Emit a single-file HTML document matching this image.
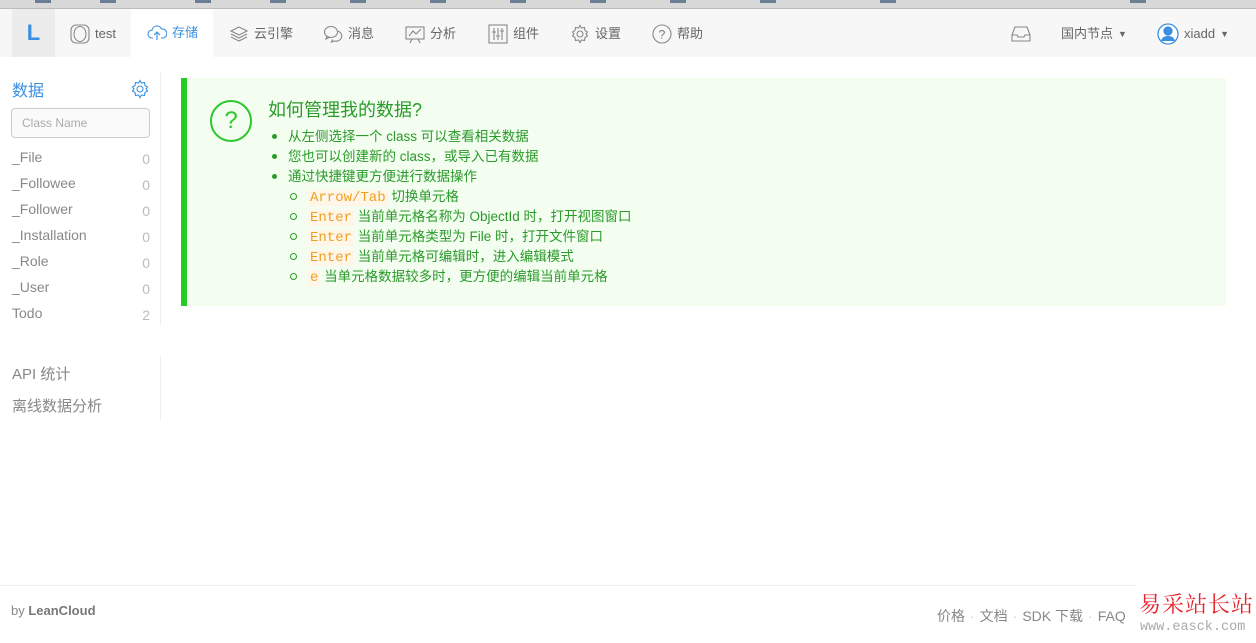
<!DOCTYPE html>
<html><head><meta charset="utf-8"><style>
*{box-sizing:border-box;margin:0;padding:0}
body{width:1256px;height:643px;overflow:hidden;background:#fff;font-family:"Liberation Sans","Noto Sans CJK SC",sans-serif;position:relative;color:#666}
.top{position:absolute;left:0;top:0;width:1256px;height:9px;background:#d8d8d8;border-bottom:1px solid #bbb}
.top i{position:absolute;top:0;width:16px;height:3px;background:#6a7f94}
.nav{position:absolute;left:0;top:9px;width:1256px;height:48px;background:#f7f7f7}
.logo{position:absolute;left:12px;top:0;width:43px;height:48px;background:#ececec;color:#3b8fe0;font-weight:bold;font-size:22px;text-align:center;line-height:48px}
.it{position:absolute;top:1px;height:48px;line-height:48px;font-size:13px;color:#666;display:flex;align-items:center;gap:5px}
.it svg{width:20px;height:20px;fill:none;stroke:#888;stroke-width:1.1}
.act{background:#fff;color:#3b8fe0;top:0}
.hd{position:absolute;left:12px;top:77px;font-size:16px;color:#3b8fe0}
.inp{position:absolute;left:11px;top:108px;width:139px;height:30px;border:1px solid #ccc;border-radius:4px;background:#fafafa;font-size:12px;color:#aaa;padding:8px 10px;line-height:12px}
.cls{position:absolute;left:12px;font-size:14px;color:#888;width:138px}
.cls span{position:absolute;right:0;top:2px;color:#bbb}
.vl{position:absolute;left:160px;width:1px;background:#eee}
.box{position:absolute;left:181px;top:78px;width:1045px;height:228px;background:#f3fef0;border-left:6px solid #22cc22}
.q{position:absolute;left:23px;top:22px;width:42px;height:42px;border:2px solid #2ec72e;border-radius:50%;color:#2ec72e;font-size:24px;text-align:center;line-height:38px}
.ttl{position:absolute;left:81px;top:18px;font-size:18px;color:#2a9a2a}
.li{position:absolute;font-size:13.5px;line-height:20px;color:#2a9a2a;white-space:nowrap}
.d{position:absolute;left:85px;width:5px;height:5px;background:#2a9a2a;border-radius:50%}
.c{position:absolute;left:103px;width:7px;height:7px;border:1.4px solid #2a9a2a;border-radius:50%}
code{font-family:"Liberation Mono",monospace;color:#f0a020;background:#fff6e8;font-size:14px;padding:0 2px}
.ft{position:absolute;left:0;top:585px;width:1137px;height:1px;background:#eee}
.fl{position:absolute;left:937px;top:606px;font-size:14px;color:#888;white-space:nowrap}
.fl b{font-weight:normal;color:#ccc;margin:0 5px}
</style></head><body>
<div class="top"><i style="left:35px"></i><i style="left:100px"></i><i style="left:195px"></i><i style="left:270px"></i><i style="left:350px"></i><i style="left:430px"></i><i style="left:510px"></i><i style="left:590px"></i><i style="left:670px"></i><i style="left:760px"></i><i style="left:880px"></i><i style="left:1130px"></i></div>
<div class="nav">
<div class="logo">L</div>
<div class="it" style="left:70px"><svg viewBox="0 0 20 20"><rect x="1" y="1" width="18" height="18" rx="5"/><ellipse cx="10" cy="10" rx="6" ry="7.5"/></svg>test</div>
<div class="it act" style="left:131px;width:82px;padding-left:16px"><svg viewBox="0 0 20 20" style="stroke:#3b8fe0"><path d="M6 15H5a4 4 0 0 1 0-8 5 5 0 0 1 9.5-1A4 4 0 0 1 16 15h-2M10 17V9M7 12l3-3 3 3"/></svg>存储</div>
<div class="it" style="left:229px"><svg viewBox="0 0 20 20"><path d="M10 3l8 4-8 4-8-4zM2 10l8 4 8-4M2 13l8 4 8-4"/></svg>云引擎</div>
<div class="it" style="left:323px"><svg viewBox="0 0 20 20"><ellipse cx="8" cy="8" rx="6.5" ry="5.5"/><path d="M4 12l-1 3 4-2"/><path d="M14.5 7a5 4.5 0 1 1-3 10l-3 1 1-2.5"/></svg>消息</div>
<div class="it" style="left:405px"><svg viewBox="0 0 20 20"><rect x="1" y="3" width="18" height="12"/><path d="M4 12l4-5 3 3 5-5M7 15l-2 4M13 15l2 4"/></svg>分析</div>
<div class="it" style="left:488px"><svg viewBox="0 0 20 20"><rect x="1" y="1" width="18" height="18"/><path d="M6 4v12M10 4v12M14 4v12M4 8h4M8 12h4M12 7h4"/></svg>组件</div>
<div class="it" style="left:570px"><svg viewBox="0 0 20 20"><circle cx="10" cy="10" r="3"/><path d="M10 1.5l1.5 2.5 3-.5.5 3 2.5 1.5-1.5 2 1.5 2-2.5 1.5-.5 3-3-.5L10 18.5l-1.5-2.5-3 .5-.5-3L2.5 12l1.5-2-1.5-2L5 6.5l.5-3 3 .5z"/></svg>设置</div>
<div class="it" style="left:652px"><svg viewBox="0 0 20 20"><circle cx="10" cy="10" r="9"/><text x="10" y="14.5" font-size="12" text-anchor="middle" fill="#777" stroke="none" font-family="Liberation Sans">?</text></svg>帮助</div>
<div class="it" style="left:1011px"><svg viewBox="0 0 20 20"><path d="M1 11l3-8h12l3 8v6H1zM1 11h5l1 2h6l1-2h5"/></svg></div>
<div class="it" style="left:1061px">国内节点 <span style="font-size:9px">▼</span></div>
<div class="it" style="left:1157px"><svg viewBox="0 0 22 22" style="width:22px;height:22px;stroke:#3b8fe0;stroke-width:1.3"><circle cx="11" cy="11" r="10" fill="#fff"/><circle cx="11" cy="8" r="4" fill="#3b8fe0"/><path d="M4 18c1-4 4-5 7-5s6 1 7 5z" fill="#3b8fe0" stroke="none"/></svg>xiadd <span style="font-size:9px">▼</span></div>
</div>
<div class="hd">数据</div>
<svg style="position:absolute;left:130px;top:79px;width:20px;height:20px;fill:none;stroke:#3b8fe0;stroke-width:1.1" viewBox="0 0 20 20"><circle cx="10" cy="10" r="3"/><path d="M10 1.5l1.5 2.5 3-.5.5 3 2.5 1.5-1.5 2 1.5 2-2.5 1.5-.5 3-3-.5L10 18.5l-1.5-2.5-3 .5-.5-3L2.5 12l1.5-2-1.5-2L5 6.5l.5-3 3 .5z"/></svg>
<div class="inp">Class Name</div>
<div class="cls" style="top:149px">_File<span>0</span></div>
<div class="cls" style="top:175px">_Followee<span>0</span></div>
<div class="cls" style="top:201px">_Follower<span>0</span></div>
<div class="cls" style="top:227px">_Installation<span>0</span></div>
<div class="cls" style="top:253px">_Role<span>0</span></div>
<div class="cls" style="top:279px">_User<span>0</span></div>
<div class="cls" style="top:305px">Todo<span>2</span></div>
<div class="vl" style="top:72px;height:253px"></div>
<div class="vl" style="top:356px;height:64px"></div>
<div class="cls" style="top:363px;font-size:15px">API 统计</div>
<div class="cls" style="top:395px;font-size:15px">离线数据分析</div>
<div class="box">
<div class="q">?</div>
<div class="ttl">如何管理我的数据?</div>
<div class="d" style="top:56px"></div><div class="li" style="left:101px;top:49px">从左侧选择一个 class 可以查看相关数据</div>
<div class="d" style="top:76px"></div><div class="li" style="left:101px;top:69px">您也可以创建新的 class，或导入已有数据</div>
<div class="d" style="top:96px"></div><div class="li" style="left:101px;top:89px">通过快捷键更方便进行数据操作</div>
<div class="c" style="top:115px"></div><div class="li" style="left:121px;top:109px"><code>Arrow/Tab</code> 切换单元格</div>
<div class="c" style="top:135px"></div><div class="li" style="left:121px;top:129px"><code>Enter</code> 当前单元格名称为 ObjectId 时，打开视图窗口</div>
<div class="c" style="top:155px"></div><div class="li" style="left:121px;top:149px"><code>Enter</code> 当前单元格类型为 File 时，打开文件窗口</div>
<div class="c" style="top:175px"></div><div class="li" style="left:121px;top:169px"><code>Enter</code> 当前单元格可编辑时，进入编辑模式</div>
<div class="c" style="top:195px"></div><div class="li" style="left:121px;top:189px"><code>e</code> 当单元格数据较多时，更方便的编辑当前单元格</div>
</div>
<div class="ft"></div>
<div style="position:absolute;left:11px;top:603px;font-size:13px;color:#888">by <b style="color:#777">LeanCloud</b></div>
<div class="fl">价格<b>·</b>文档<b>·</b>SDK 下载<b>·</b>FAQ</div>
<div style="position:absolute;left:1137px;top:586px;width:119px;height:57px;background:#fff"></div>
<div style="position:absolute;left:1139px;top:588px;font-size:22px;color:#e8202a;font-family:'Noto Serif CJK SC',serif;letter-spacing:1px;white-space:nowrap">易采站长站</div>
<div style="position:absolute;left:1140px;top:620px;font-size:13.5px;color:#aaa;font-family:'Liberation Mono',monospace;white-space:nowrap">www.easck.com</div>
</body></html>
